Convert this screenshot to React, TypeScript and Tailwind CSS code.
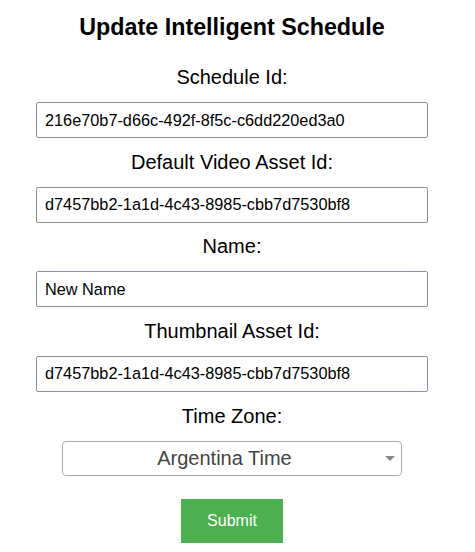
import { useState } from 'react';

const FIELDS: Array<{ key: string; label: string; value: string }> = [
  { key: 'id', label: 'Schedule Id:', value: '216e70b7-d66c-492f-8f5c-c6dd220ed3a0' },
  { key: 'video', label: 'Default Video Asset Id:', value: 'd7457bb2-1a1d-4c43-8985-cbb7d7530bf8' },
  { key: 'name', label: 'Name:', value: 'New Name' },
  { key: 'thumb', label: 'Thumbnail Asset Id:', value: 'd7457bb2-1a1d-4c43-8985-cbb7d7530bf8' },
];

export default function App() {
  const [values, setValues] = useState<Record<string, string>>(() =>
    Object.fromEntries(FIELDS.map((f) => [f.key, f.value])),
  );
  const [tz, setTz] = useState('argentina');

  return (
    <div className="min-h-[552px] bg-white font-['Liberation_Sans',Arial,sans-serif] text-black">
      <form
        onSubmit={(e) => e.preventDefault()}
        className="flex w-[464px] flex-col items-center pt-[14px]"
      >
        <h2 className="mb-[25px] text-[23.3px] font-bold leading-[27px]">Update Intelligent Schedule</h2>

        {FIELDS.map((f) => (
          <div key={f.key} className="flex flex-col items-center">
            <label htmlFor={f.key} className="mb-[13px] text-[20px] leading-[23px]">
              {f.label}
            </label>
            <input
              id={f.key}
              type="text"
              value={values[f.key]}
              onChange={(e) => setValues({ ...values, [f.key]: e.target.value })}
              className="mb-[12.67px] h-[36px] w-[392px] rounded-[2px] border border-[#8f8f9d] bg-white px-[8px] text-[16.3px] text-black focus:outline-none"
            />
          </div>
        ))}

        <label htmlFor="tz" className="mb-[13px] text-[20px] leading-[23px]">
          Time Zone:
        </label>
        <div className="relative">
          <select
            id="tz"
            value={tz}
            onChange={(e) => setTz(e.target.value)}
            className="h-[35px] w-[340px] appearance-none rounded-[4px] border border-[#aaaaaa] bg-white pl-[8px] pr-[23px] text-center text-[20px] text-[#444444] [text-align-last:center] focus:outline-none"
          >
            <option value="argentina">Argentina Time</option>
            <option value="eastern">Eastern Time</option>
            <option value="pacific">Pacific Time</option>
          </select>
          <svg
            aria-hidden
            className="pointer-events-none absolute right-[7px] top-[15px] h-[5px] w-[10px]"
            viewBox="0 0 10 5"
          >
            <path d="M0 0h10L5 5z" fill="#888888" />
          </svg>
        </div>

        <button
          type="submit"
          className="mt-[23px] h-[44px] w-[102px] bg-[#4caf50] text-[16px] text-white"
        >
          Submit
        </button>
      </form>
    </div>
  );
}
